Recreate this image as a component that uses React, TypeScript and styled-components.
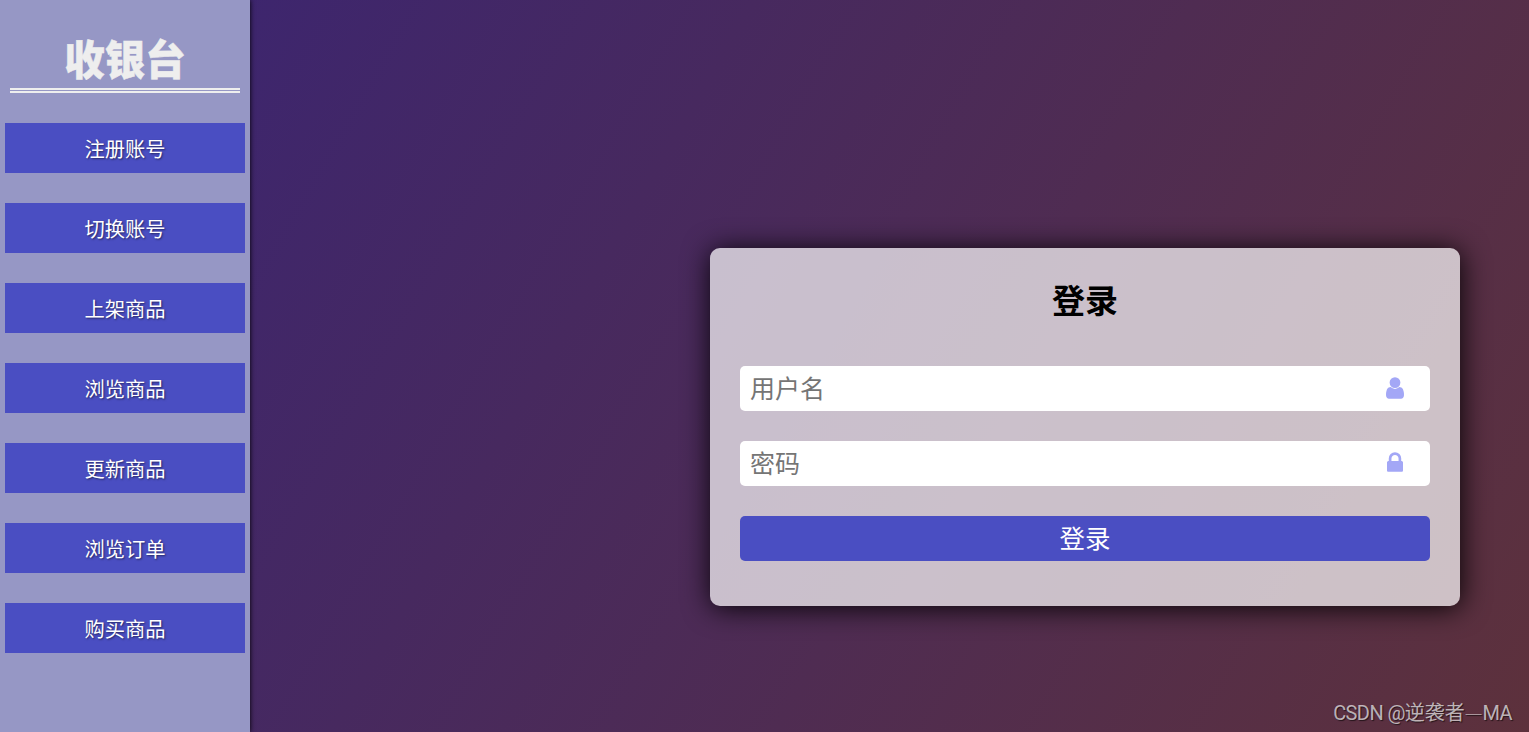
import styled, { createGlobalStyle } from 'styled-components';


const primary = '#4a4ec2';
const iconColor = '#a3a7f6';


const GlobalStyle = createGlobalStyle`
  * {
    box-sizing: border-box;
    margin: 0;
    padding: 0;
  }

  body {
    font-family: 'Noto Sans CJK SC', sans-serif;
    overflow: hidden;
  }
`;

const Page = styled.div`
  display: flex;
  width: 100vw;
  height: 100vh;
  background: linear-gradient(120deg, #392475, #5d313c);
`;

const Sidebar = styled.aside`
  display: flex;
  flex-direction: column;
  flex: none;
  width: 250px;
  padding: 30px 5px 0;
  background-color: #9697c5;
  box-shadow: 0 0 5px #000;
`;

const Brand = styled.h1`
  height: 63px;
  margin: 0 5px 30px;
  border-bottom: 5px double #eee;
  color: #eee;
  font-size: 40.5px;
  font-weight: 900;
  line-height: 56px;
  text-align: center;
  -webkit-text-stroke: 0.5px #eee;
`;

const Menu = styled.nav`
  display: flex;
  flex-direction: column;
  gap: 30px;
`;

const MenuItem = styled.button`
  height: 50px;
  padding-top: 1px;
  border: none;
  background-color: ${primary};
  color: #fff;
  font-family: inherit;
  font-size: 20.3px;
  line-height: 49px;
  text-shadow: 1px 1px 2px rgba(0, 0, 0, 0.5);
`;

const Main = styled.main`
  display: flex;
  flex: 1;
  flex-direction: column;
  align-items: flex-end;
  justify-content: space-between;
  padding: 248px 0 0;
`;

const LoginForm = styled.form`
  display: flex;
  flex-direction: column;
  gap: 30px;
  width: 750px;
  height: 358px;
  margin-right: 69px;
  padding: 30px;
  border-radius: 10px;
  background-color: rgba(255, 255, 255, 0.7);
  box-shadow: 1px 2px 28px rgba(0, 0, 0, 0.95);
`;

const Title = styled.h2`
  height: 58px;
  font-size: 33px;
  line-height: 42px;
  text-align: center;
`;

const Field = styled.label`
  display: flex;
  align-items: center;
  height: 45px;
  padding: 0 10px;
  border-radius: 5px;
  background-color: #fff;
`;

const Input = styled.input`
  flex: 1;
  height: 45px;
  padding-bottom: 4px;
  border: none;
  outline: none;
  background: none;
  font-family: inherit;
  font-size: 25px;

  &::placeholder {
    color: #757575;
  }
`;

const IconSlot = styled.span<{ $lift: number }>`
  display: flex;
  justify-content: center;
  width: 50px;
  padding-bottom: ${({ $lift }) => $lift}px;
  color: ${iconColor};
`;

const Submit = styled.button`
  height: 45px;
  padding-bottom: 4px;
  border: none;
  border-radius: 5px;
  background-color: ${primary};
  color: #fff;
  font-family: inherit;
  font-size: 25.5px;
  line-height: 41px;
`;

const Watermark = styled.footer`
  height: 40px;
  padding-right: 17px;
  color: rgba(255, 255, 255, 0.66);
  font-family: Roboto, 'Noto Sans CJK SC', sans-serif;
  font-size: 20px;
  line-height: 40px;
  text-shadow: 1px 1px 1px rgba(0, 0, 0, 0.6);
`;

const Latin = styled.span`
  letter-spacing: -0.6px;
`;

const Dash = styled.span`
  color: rgba(255, 255, 255, 0.5);
  font-family: 'Noto Sans CJK SC', sans-serif;
  font-weight: 300;
`;


const menuItems = ['注册账号', '切换账号', '上架商品', '浏览商品', '更新商品', '浏览订单', '购买商品'];

const UserIcon = () => (
  <svg width="18" height="22" viewBox="0 0 1280 1536" fill="currentColor">
    <path
      transform="matrix(1 0 0 -1 0 1408)"
      d="M1280 137q0 -109 -62.5 -187t-150.5 -78h-854q-88 0 -150.5 78t-62.5 187q0 85 8.5 160.5t31.5 152t58.5 131t94 89t134.5 34.5q131 -128 313 -128t313 128q76 0 134.5 -34.5t94 -89t58.5 -131t31.5 -152t8.5 -160.5zM1024 1024q0 -159 -112.5 -271.5t-271.5 -112.5t-271.5 112.5t-112.5 271.5t112.5 271.5t271.5 112.5t271.5 -112.5t112.5 -271.5z"
    />
  </svg>
);

const LockIcon = () => (
  <svg width="16" height="20" viewBox="0 0 1152 1408" fill="currentColor">
    <path
      transform="matrix(1 0 0 -1 0 1408)"
      d="M320 768h512v192q0 106 -75 181t-181 75t-181 -75t-75 -181v-192zM1152 672v-576q0 -40 -28 -68t-68 -28h-960q-40 0 -68 28t-28 68v576q0 40 28 68t68 28h32v192q0 184 132 316t316 132t316 -132t132 -316v-192h32q40 0 68 -28t28 -68z"
    />
  </svg>
);


export default function App() {
  return (
    <>
      <GlobalStyle />
      <Page>
        <Sidebar>
          <Brand>收银台</Brand>
          <Menu>
            {menuItems.map((item) => (
              <MenuItem key={item}>{item}</MenuItem>
            ))}
          </Menu>
        </Sidebar>
        <Main>
          <LoginForm>
            <Title>登录</Title>
            <Field>
              <Input type="text" placeholder="用户名" />
              <IconSlot $lift={1}><UserIcon /></IconSlot>
            </Field>
            <Field>
              <Input type="password" placeholder="密码" />
              <IconSlot $lift={3}><LockIcon /></IconSlot>
            </Field>
            <Submit type="button">登录</Submit>
          </LoginForm>
          <Watermark>
            <Latin>CSDN @</Latin>逆袭者<Dash>—</Dash><Latin>MA</Latin>
          </Watermark>
        </Main>
      </Page>
    </>
  );
}
